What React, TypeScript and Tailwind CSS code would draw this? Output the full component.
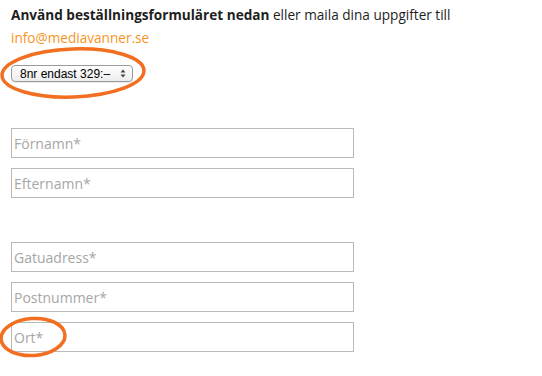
import React from "react";

const fields1 = ["Förnamn*", "Efternamn*"];
const fields2 = ["Gatuadress*", "Postnummer*", "Ort*"];

function Field({ label }: { label: string }) {
  return (
    <div className="w-[343px] h-[30px] border border-[#b9b9b9] bg-white flex items-center pl-[2px] text-[14px] text-[#a6a6a6]">
      {label}
    </div>
  );
}

export default function App() {
  return (
    <div
      className="relative w-[542px] h-[376px] bg-white overflow-hidden"
      style={{ fontFamily: '"Open Sans", "Liberation Sans", sans-serif' }}
    >
      <div className="pl-[11px] pt-[3px] flex flex-col">
        <p className="text-[13.6px] leading-[23px] text-[#1e1e1e]">
          <span className="font-bold">Använd beställningsformuläret nedan</span> eller maila dina uppgifter till
          <br />
          <span className="text-[#f7941d]">info@mediavanner.se</span>
        </p>
        <div
          className="mt-[16px] w-[122px] h-[17px] rounded-[4px] border border-[#9a9a9a] bg-gradient-to-b from-white to-[#ececec] flex items-center pl-[8px] pr-[6px] text-[12px] text-black shadow-[0_1px_0_rgba(0,0,0,0.08)]"
          style={{ fontFamily: '"Liberation Sans", "DejaVu Sans", sans-serif' }}
        >
          <span className="leading-none">8nr endast 329:–</span>
          <svg className="ml-auto" width="6" height="9" viewBox="0 0 6 9">
            <path d="M0.5 3.5 L3 0.5 L5.5 3.5 Z" fill="#444" />
            <path d="M0.5 5.5 L3 8.5 L5.5 5.5 Z" fill="#444" />
          </svg>
        </div>
        <div className="mt-[46px] flex flex-col gap-[10px]">
          {fields1.map((f) => (
            <Field key={f} label={f} />
          ))}
        </div>
        <div className="mt-[44px] flex flex-col gap-[10px]">
          {fields2.map((f) => (
            <Field key={f} label={f} />
          ))}
        </div>
      </div>
      <svg className="absolute left-0 top-0 pointer-events-none" width="542" height="376">
        <ellipse cx="73" cy="73" rx="71" ry="24" fill="none" stroke="#f26f21" strokeWidth="3.5" transform="rotate(-2 73 73)" />
        <ellipse cx="33" cy="337" rx="32" ry="18.5" fill="none" stroke="#f26f21" strokeWidth="3.5" transform="rotate(-4 33 337)" />
      </svg>
    </div>
  );
}
